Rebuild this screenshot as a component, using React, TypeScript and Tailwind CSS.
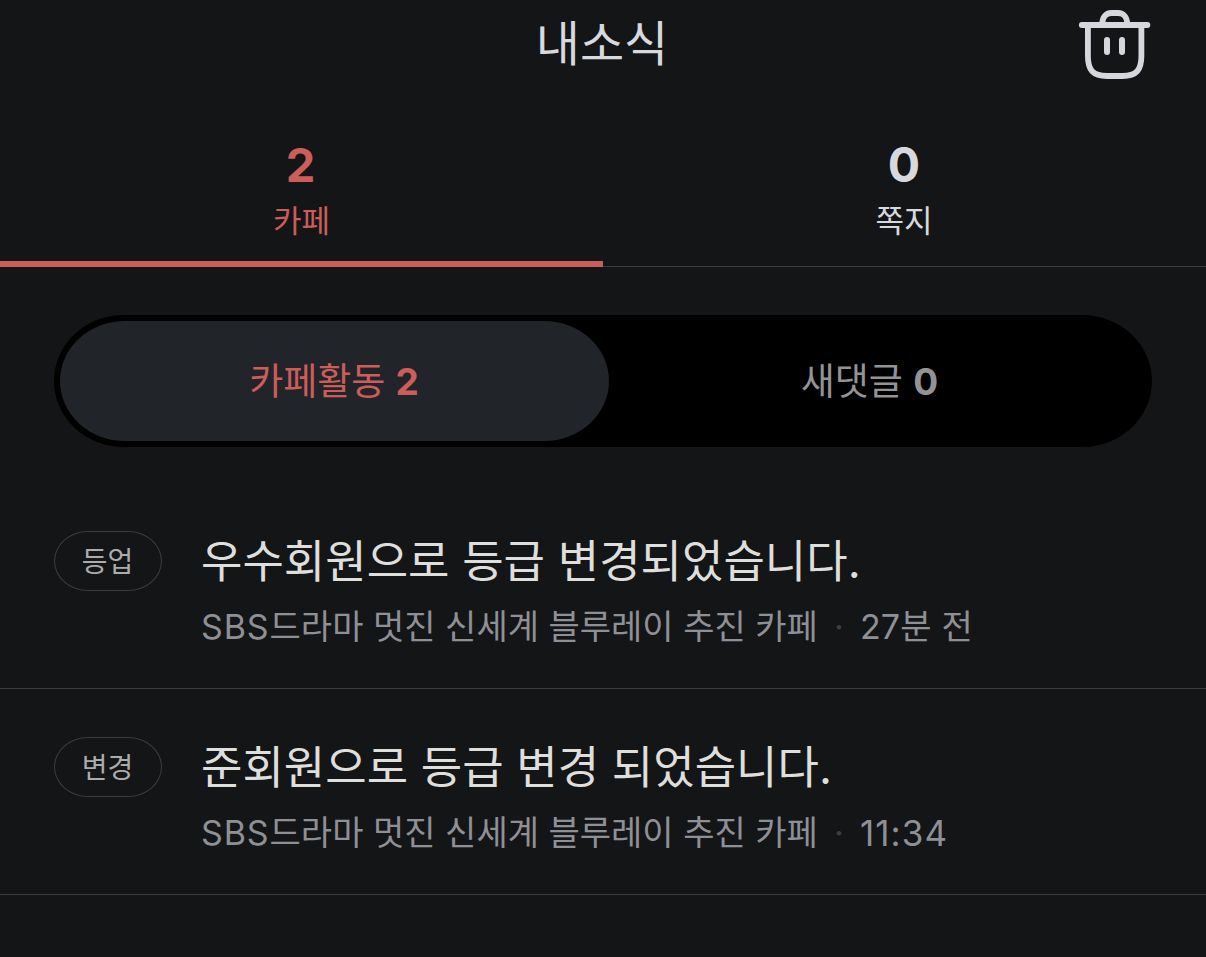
type Notice = {
  id: number;
  tag: string;
  title: string;
  channel: string;
  cafe: string;
  time: string;
  timeClass: string;
};

const notices: Notice[] = [
  {
    id: 1,
    tag: "등업",
    title: "우수회원으로 등급 변경되었습니다.",
    channel: "SBS",
    cafe: "드라마 멋진 신세계 블루레이 추진 카페",
    time: "27분 전",
    timeClass: "tracking-[0.2px]",
  },
  {
    id: 2,
    tag: "변경",
    title: "준회원으로 등급 변경 되었습니다.",
    channel: "SBS",
    cafe: "드라마 멋진 신세계 블루레이 추진 카페",
    time: "11:34",
    timeClass: "text-[35px] tracking-[1.1px]",
  },
];

function TrashIcon() {
  return (
    <svg width="74" height="70" viewBox="0 0 74 70" fill="none" stroke="#d6d7dc" strokeWidth="5.800" strokeLinecap="round">
      <path d="M3.800 15h65.600" />
      <path d="M24.200 14c0-7 4-11 9-11h7c5 0 9 4 9 11" />
      <path d="M9.900 16v30c0 14 5 20 19 20h15.500c14 0 19-6 19-20V16" />
      <path d="M29 30v12M44 30v12" strokeWidth="6" />
    </svg>
  );
}

function App() {
  return (
    <div className="h-[957px] w-[1206px] overflow-hidden bg-[#141517] font-['Inter','Noto_Sans_CJK_KR',sans-serif] text-[#d8d9de]">
      {/* header */}
      <header className="grid h-[90px] grid-cols-3 items-start">
        <span />
        <h1 className="pt-[10px] pr-[2px] text-center text-[48px] leading-[68px]">내소식</h1>
        <button className="mr-[54px] mt-[10px] justify-self-end">
          <TrashIcon />
        </button>
      </header>
      {/* main tabs */}
      <nav className="grid h-[177px] grid-cols-2 text-center">
        <div className="border-b-[6px] border-[#cc5d5a] pt-[49px] text-[#cc5d5a]">
          <p className="pr-[2px] text-[47px] font-bold leading-[52px]">2</p>
          <p className="text-[31px] leading-[60px]">카페</p>
        </div>
        <div className="border-b border-[#3b3c3e] pt-[49px] pr-[1px]">
          <p className="text-[48px] font-bold leading-[52px]">0</p>
          <p className="text-[31px] leading-[60px]">쪽지</p>
        </div>
      </nav>
      {/* segment switch */}
      <div className="mx-[54px] mt-[48px] flex h-[132px] rounded-[70px/66px] bg-black p-[6px] text-center text-[37px] leading-[122px]">
        <div className="w-[549px] rounded-[65px/60px] bg-[#212429] pr-[1px] tracking-[-0.1px] text-[#cc5d5a]">
          카페활동 <b>2</b>
        </div>
        <div className="flex-1 pr-[16px] text-[#939396]">
          새댓글 <b>0</b>
        </div>
      </div>
      {/* notice list */}
      <ul className="mt-[36px]">
        {notices.map((n) => (
          <li key={n.id} className="flex h-[206px] border-b border-[#3b3c3e] px-[54px] pt-[48px]">
            <span className="h-[60px] w-[108px] shrink-0 rounded-[34px/30px] border border-[#3b3c3f] pr-[1px] text-center text-[28px] leading-[60px] text-[#abacae]">
              {n.tag}
            </span>
            <div className="ml-[39px] whitespace-nowrap">
              <p className="text-[45px] leading-[61px] tracking-[0.02px] text-[#dededc]">{n.title}</p>
              <p className="mt-[7px] flex text-[34px] leading-[56px] text-[#8f9095]">
                <span>
                  <span className="tracking-[0.9px]">{n.channel}</span>
                  {n.cafe}
                </span>
                <span className="w-[42px] text-center text-[#3e3f42]">·</span>
                <span className={n.timeClass}>{n.time}</span>
              </p>
            </div>
          </li>
        ))}
      </ul>
    </div>
  );
}

export default App;
